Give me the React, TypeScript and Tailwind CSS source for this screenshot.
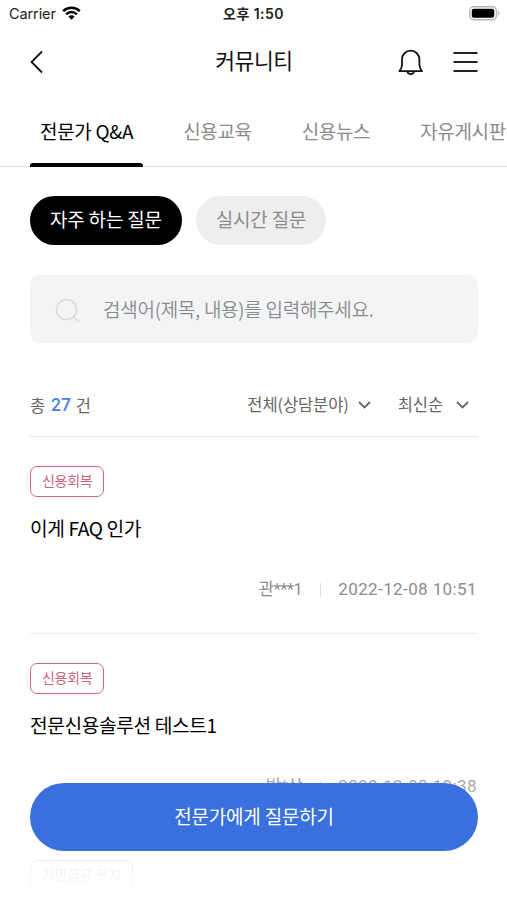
import { FC } from 'react';

type Question = {
    id: number;
    category: string;
    categoryClass: string;
    title: string;
    author: string;
    date: string;
};

const tabs = ['전문가 Q&A', '신용교육', '신용뉴스', '자유게시판'];

const questions: Question[] = [
    {
        id: 1,
        category: '신용회복',
        categoryClass: 'border-[#d0667e] text-[#cc647c]',
        title: '이게 FAQ 인가',
        author: '관***1',
        date: '2022-12-08 10:51',
    },
    {
        id: 2,
        category: '신용회복',
        categoryClass: 'border-[#d0667e] text-[#cc647c]',
        title: '전문신용솔루션 테스트1',
        author: '박*상',
        date: '2022-12-08 10:38',
    },
    {
        id: 3,
        category: '서민금융·복지',
        categoryClass: 'border-[#d8a070] text-[#b8a868]',
        title: '',
        author: '',
        date: '',
    },
];

const StatusBar = () => (
    <div className="grid h-7 grid-cols-3 items-center pr-[7px] pl-[9px] font-['Inter',_'Noto_Sans_CJK_KR',sans-serif] text-[14px] text-[#222]">
        <div className="flex items-center gap-[6px]">
            <span className="text-[14.5px] tracking-[-0.1px]">Carrier</span>
            <svg className="-mt-[2px]" width="19" height="14" viewBox="0 0 19 14" fill="none" stroke="#000" strokeWidth="2.5">
                <path d="M1.2 5.2a11.8 11.8 0 0 1 16.6 0" />
                <path d="M4.1 8.3a7.7 7.7 0 0 1 10.8 0" />
                <path d="M9.5 13.8 6.4 10.6a4.4 4.4 0 0 1 6.2 0z" fill="#000" stroke="none" />
            </svg>
        </div>
        <span className="-ml-0.5 pb-px text-center font-semibold tracking-[0.45px] whitespace-nowrap">오후 1:50</span>
        <svg className="-mt-px justify-self-end" width="31" height="15" viewBox="0 0 31 15">
            <rect x="0.8" y="0.8" width="26.6" height="13" rx="4" fill="#fff" stroke="#b5b5b5" strokeWidth="1.4" />
            <rect x="2.8" y="2.8" width="22.4" height="9" rx="2" fill="#000" />
            <path d="M28.9 5v4.6c1-.4 1.6-1.2 1.6-2.3S29.9 5.4 28.9 5z" fill="#b5b5b5" />
        </svg>
    </div>
);

const Header = () => (
    <header className="grid h-[68px] grid-cols-3 items-center pr-[29px] pl-[30px]">
        <svg width="14" height="24" viewBox="0 0 14 24" fill="none" stroke="#111" strokeWidth="1.8">
            <path d="M12 1.5 1.5 12 12 22.5" />
        </svg>
        <h1 className="pb-[3px] text-center text-[21.5px] tracking-[-0.4px] whitespace-nowrap text-[#111]">커뮤니티</h1>
        <div className="flex items-center justify-end gap-[29px]">
            <svg width="26" height="27" viewBox="0 0 26 27" fill="none" stroke="#111" strokeWidth="1.8">
                <path
                    d="M1.4 22.2c1.8-2 2.600-3.800 2.600-6.600V10.400a8.700 8.700 0 0 1 17.400 0v5.200c0 2.800.8 4.600 2.600 6.600z"
                    strokeLinejoin="round"
                />
                <path d="M9.200 22.400a3.600 3.600 0 0 0 7 0" />
            </svg>
            <svg width="25" height="20" viewBox="0 0 25 20" stroke="#222" strokeWidth="1.8">
                <path d="M0.5 1h24M0.5 10h24M0.5 19h24" />
            </svg>
        </div>
    </header>
);

const Chevron = () => (
    <svg width="13" height="8" viewBox="0 0 13 8" fill="none" stroke="#666" strokeWidth="1.8">
        <path d="M1 1l5.5 5.5L12 1" />
    </svg>
);

const QuestionItem: FC<{ question: Question }> = ({ question }) => (
    <li className="h-[197px] shrink-0 border-b border-[#ebebeb] pt-[29px]">
        <span
            className={`inline-flex h-[31px] items-center rounded-[7px] border-[1.5px] px-[11px] font-['Roboto','Noto_Sans_CJK_KR',sans-serif] text-[14px] tracking-[-0.3px] ${question.categoryClass}`}
        >
            {question.category}
        </span>
        <h2 className="mt-[17px] h-7 text-[19.2px] leading-7 tracking-[-0.4px] text-black">{question.title}</h2>
        {question.author && (
            <div className="mt-[34px] flex h-7 items-center justify-end pr-px text-[17px] text-[#8c8c8c]">
                <span className="font-['Roboto','Noto_Sans_CJK_KR',sans-serif] tracking-[-0.7px]">
                    {question.author}
                </span>
                <span className="mr-[17px] ml-[18px] h-[14px] w-px bg-[#ddd]" />
                <span className="font-['Roboto',sans-serif] tracking-[0.4px]">{question.date}</span>
            </div>
        )}
    </li>
);

export default function App() {
    return (
        <div className="relative flex h-[900px] w-[507px] flex-col overflow-hidden bg-white font-['Noto_Sans_CJK_KR',sans-serif]">
            <StatusBar />
            <Header />
            <nav className="flex h-[71px] shrink-0 gap-[30px] border-b border-[#e2e2e2] pl-[30px]">
                {tabs.map((tab, index) => (
                    <button
                        key={tab}
                        className={`relative h-[71px] shrink-0 px-[10px] text-[19px] ${
                            index === 0 ? 'tracking-[-0.3px] text-black' : 'tracking-[-0.35px] text-[#8c8c8c]'
                        }`}
                    >
                        {tab}
                        {index === 0 && (
                            <span className="absolute bottom-0 left-0 h-1 w-full rounded-t-[3px] bg-black" />
                        )}
                    </button>
                ))}
            </nav>
            <main className="flex min-h-0 flex-1 flex-col px-[30px] pt-[29px]">
                <div className="flex shrink-0 gap-[14px] text-[19px] tracking-[-0.2px]">
                    <button className="h-[49px] rounded-full bg-black px-5 pb-0.5 text-white">자주 하는 질문</button>
                    <button className="h-[49px] rounded-full bg-[#eee] px-5 pb-0.5 text-[#8c8c8c]">
                        실시간 질문
                    </button>
                </div>
                <div className="mt-[30px] flex h-[68px] w-[448px] shrink-0 items-center rounded-[10px] bg-[#f2f4f6] pl-[25px]">
                    <svg
                        className="mt-1"
                        width="26"
                        height="26"
                        viewBox="0 0 26 26"
                        fill="none"
                        stroke="#dcdcdd"
                        strokeWidth="1.7"
                    >
                        <circle cx="11.5" cy="11.5" r="10" />
                        <path d="M18.5 18.5l6 6" />
                    </svg>
                    <span className="ml-[22px] pt-px text-[19px] font-[350] tracking-[-0.27px] text-[#8c8c8c]">
                        검색어(제목, 내용)를 입력해주세요.
                    </span>
                </div>
                <div className="mt-[31px] flex h-[63px] w-[448px] shrink-0 items-center border-b border-[#e5e5e5] text-[16.5px] tracking-[-0.1px] text-[#666]">
                    <div className="flex items-center gap-[5px]">
                        총
                        <b className="pt-px pl-px font-['Roboto',sans-serif] text-[17.5px] font-medium text-[#4b83ec]">
                            27
                        </b>
                        건
                    </div>
                    <div className="ml-auto flex items-center gap-[9px] pr-[9px]">
                        <span className="pb-0.5">전체(상담분야)</span>
                        <Chevron />
                    </div>
                    <div className="ml-[18px] flex items-center gap-[13px] pr-[9px]">
                        <span className="pb-0.5">최신순</span>
                        <Chevron />
                    </div>
                </div>
                <ul className="flex w-[448px] flex-col">
                    {questions.map((question) => (
                        <QuestionItem key={question.id} question={question} />
                    ))}
                </ul>
            </main>
            <div className="absolute inset-x-0 bottom-0 h-[150px] bg-gradient-to-b from-transparent to-white to-95% px-[30px] pt-[33px]">
                <button className="h-[68px] w-[448px] rounded-full bg-[#3a70dd] pb-0.5 text-[19px] tracking-[-0.2px] text-white">
                    전문가에게 질문하기
                </button>
            </div>
        </div>
    );
}
